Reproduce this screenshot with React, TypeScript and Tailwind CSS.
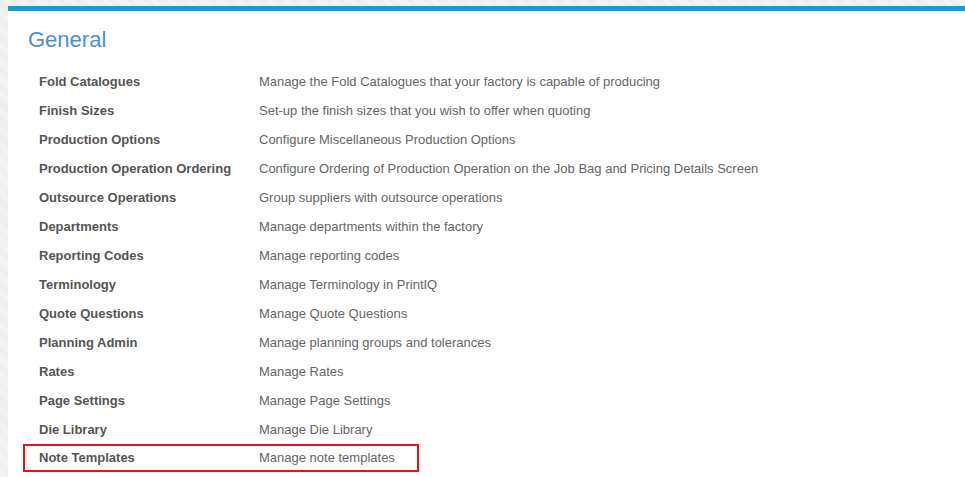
const rows: [string, string][] = [
  ['Fold Catalogues', 'Manage the Fold Catalogues that your factory is capable of producing'],
  ['Finish Sizes', 'Set-up the finish sizes that you wish to offer when quoting'],
  ['Production Options', 'Configure Miscellaneous Production Options'],
  ['Production Operation Ordering', 'Configure Ordering of Production Operation on the Job Bag and Pricing Details Screen'],
  ['Outsource Operations', 'Group suppliers with outsource operations'],
  ['Departments', 'Manage departments within the factory'],
  ['Reporting Codes', 'Manage reporting codes'],
  ['Terminology', 'Manage Terminology in PrintIQ'],
  ['Quote Questions', 'Manage Quote Questions'],
  ['Planning Admin', 'Manage planning groups and tolerances'],
  ['Rates', 'Manage Rates'],
  ['Page Settings', 'Manage Page Settings'],
  ['Die Library', 'Manage Die Library'],
  ['Note Templates', 'Manage note templates'],
];

export default function App() {
  return (
    <div
      className="w-[965px] h-[477px] overflow-hidden pt-[6px] pl-[8px] bg-[#f1f1f1] bg-[repeating-linear-gradient(45deg,#f6f6f6_0px,#f6f6f6_1px,#ebebeb_1px,#ebebeb_2px)]"
      style={{ fontFamily: '"Liberation Sans", Arial, sans-serif' }}
    >
      <div className="h-full bg-white border-t-[5px] border-[#0aa0e0]">
        <h1 className="pl-[20px] pt-[14px] text-[22px] leading-[30px] text-[#4a8fde] font-normal">General</h1>
        <div className="mt-[12px] flex flex-col">
          {rows.map(([name, desc], i) => {
            const last = i === rows.length - 1;
            return (
              <div
                key={name}
                className={
                  last
                    ? 'ml-[15px] w-[396px] h-[28px] flex items-center border-2 border-[#e8141c] text-[13px]'
                    : 'ml-[15px] h-[29px] flex items-center border-2 border-transparent text-[13px]'
                }
              >
                <span className="w-[234px] pl-[14px] font-bold text-[#555555]">{name}</span>
                <span className="text-[#666666]">{desc}</span>
              </div>
            );
          })}
        </div>
      </div>
    </div>
  );
}
